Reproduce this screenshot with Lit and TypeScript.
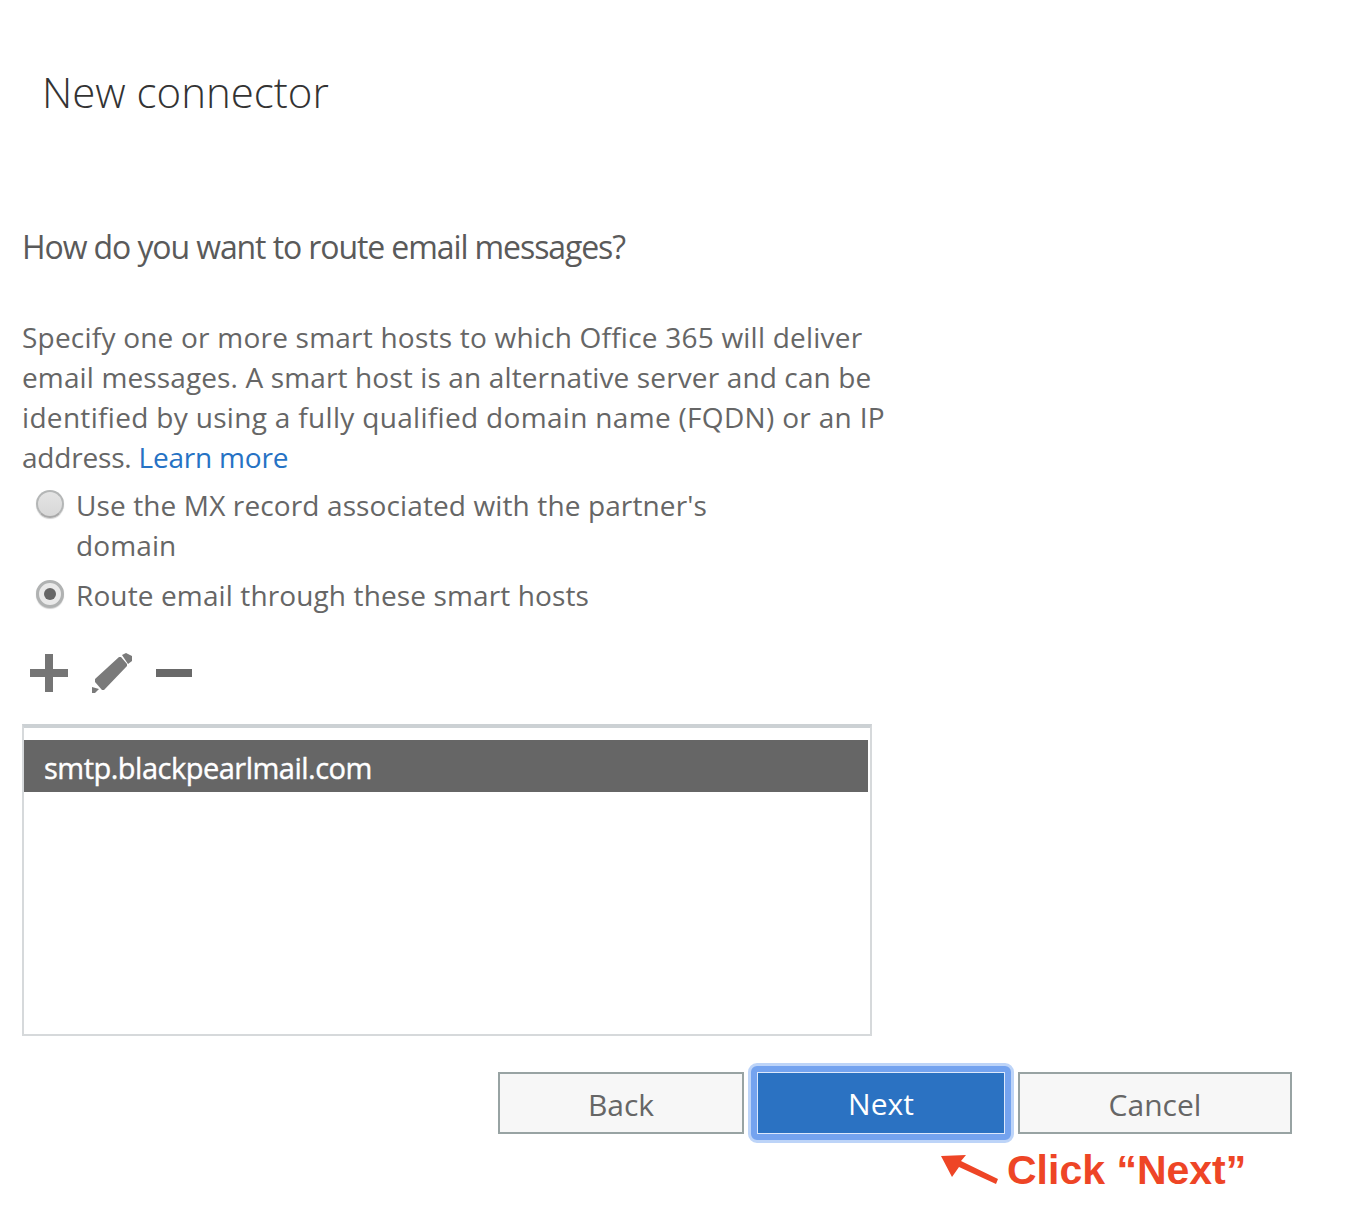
import { LitElement, html, css } from 'lit';
import { customElement } from 'lit/decorators.js';

@customElement('app-root')
export class AppRoot extends LitElement {
    static styles = css`
        :host {
            display: block;
            height: 1208px;
            background: #fff;
            color: #666;
            font-family: "Open Sans", "Noto Sans", sans-serif;
            overflow: hidden;
        }

        * {
            box-sizing: border-box;
            margin: 0;
            padding: 0;
        }

        .title {
            padding: 63px 0 0 42px;
            height: 224px;
            font-size: 42px;
            line-height: 58px;
            font-weight: 300;
            color: #333;
        }

        .content {
            padding-left: 22px;
        }

        .heading {
            height: 93px;
            font-size: 32px;
            line-height: 46px;
            color: #5a5a5a;
            letter-spacing: -1.1px;
        }

        .intro {
            width: 900px;
            font-size: 28px;
            line-height: 40px;
        }

        .intro div {
            white-space: nowrap;
        }

        /* the source font runs a little narrower, so each line is fitted */
        .l1 { letter-spacing: 0.22px; }
        .l2 { letter-spacing: 0.13px; }
        .l3 { letter-spacing: 0.32px; }
        .l4 { letter-spacing: -0.2px; }

        .intro a {
            color: #2672c4;
            text-decoration: none;
        }

        .radio {
            display: flex;
            gap: 12px;
            padding-left: 14px;
            width: 720px;
            font-size: 28px;
            line-height: 40px;
            letter-spacing: 0.12px;
        }

        .radio + .radio {
            margin-top: 10px;
        }

        .options {
            margin-top: 8px;
        }

        .dot {
            flex: none;
            width: 28px;
            height: 28px;
            margin-top: 5px;
            border-radius: 50%;
            border: 2px solid #b4b6b6;
            border-bottom-color: #a8a8a8;
            background: linear-gradient(#e4e4e4, #d8d8d8);
            box-shadow: 0 1px 1px #d0d0d0;
            display: flex;
            align-items: center;
            justify-content: center;
        }

        .dot.on {
            background: #e9e9e9;
            border-width: 3px;
            border-color: #b0b2b2;
        }

        .dot.on::after {
            content: "";
            width: 12px;
            height: 12px;
            border-radius: 50%;
            background: #666;
        }

        .tools {
            display: flex;
            align-items: center;
            margin-top: 35px;
            height: 46px;
            padding-left: 8px;
            gap: 24px;
        }

        .tools svg {
            display: block;
            flex: none;
        }

        .list {
            margin-top: 28px;
            width: 850px;
            height: 312px;
            border: 2px solid #d6d9db;
            border-top: 4px solid #ccd1d4;
            padding-top: 12px;
        }

        .row {
            height: 52px;
            width: 844px;
            background: #666;
            color: #fff;
            padding-left: 20px;
            font-size: 29px;
            -webkit-text-stroke: 0.4px #fff;
            line-height: 55px;
            letter-spacing: -0.5px;
        }

        .actions {
            display: flex;
            gap: 12px;
            margin: 36px 0 0 476px;
            isolation: isolate;
        }

        .btn {
            height: 62px;
            padding-top: 1px;
            border: 2px solid #98a3a3;
            background: #f7f7f7;
            color: #666;
            font: inherit;
            font-size: 30px;
            line-height: 60px;
        }

        .back { width: 246px; }
        .cancel { width: 274px; }

        .next {
            position: relative;
            width: 248px;
            margin: 0 1px;
            background: #2b72c2;
            color: #fff;
            border: 1px solid #dce8fb;
        }

        /* focus ring, sits behind the button */
        .next::before {
            content: "";
            position: absolute;
            inset: -10px;
            z-index: -1;
            border: 3px solid #bdd4f8;
            border-radius: 9px;
            background: #74a3ef;
        }

        .note {
            display: flex;
            align-items: center;
            gap: 7px;
            margin: 12px 0 0 918px;
            height: 48px;
            color: #ee4526;
            font-family: "Liberation Sans", Arial, sans-serif;
            font-weight: 700;
            font-size: 41px;
            line-height: 48px;
            white-space: nowrap;
        }
    `;

    render() {
        return html`
            <div class="title">New connector</div>
            <div class="content">
                <div class="heading">How do you want to route email messages?</div>
                <div class="intro">
                    <div class="l1">Specify one or more smart hosts to which Office 365 will deliver</div>
                    <div class="l2">email messages. A smart host is an alternative server and can be</div>
                    <div class="l3">identified by using a fully qualified domain name (FQDN) or an IP</div>
                    <div class="l4">address. <a href="#">Learn more</a></div>
                </div>
                <div class="options">
                    <div class="radio">
                        <span class="dot"></span>
                        <span>Use the MX record associated with the partner's domain</span>
                    </div>
                    <div class="radio">
                        <span class="dot on"></span>
                        <span>Route email through these smart hosts</span>
                    </div>
                </div>
                <div class="tools">
                    <svg width="38" height="38" viewBox="0 0 38 38" fill="#757575">
                        <path d="M15 0h8v15h15v8H23v15h-8V23H0v-8h15z" />
                    </svg>
                    <svg width="40" height="40" viewBox="0 0 40 40" fill="#7a7a7a">
                        <path d="M3 26L27 4l2 0 6 7v2L12 37h-2l-7-8zM30 2l4-2 6 3v5l-4 3zM0 34l7 2-4 4H0z" />
                    </svg>
                    <svg width="36" height="8" viewBox="0 0 36 8" fill="#696969">
                        <rect width="36" height="8" />
                    </svg>
                </div>
                <div class="list">
                    <div class="row">smtp.blackpearlmail.com</div>
                </div>
                <div class="actions">
                    <button class="btn back">Back</button>
                    <button class="btn next">Next</button>
                    <button class="btn cancel">Cancel</button>
                </div>
                <div class="note">
                    <svg width="60" height="34" viewBox="0 0 60 34" fill="#ee4526">
                        <path d="M1 3l25-1-5 6 37 18-2 5-37-17-7 10z" />
                    </svg>
                    <span>Click “Next”</span>
                </div>
            </div>
        `;
    }
}
